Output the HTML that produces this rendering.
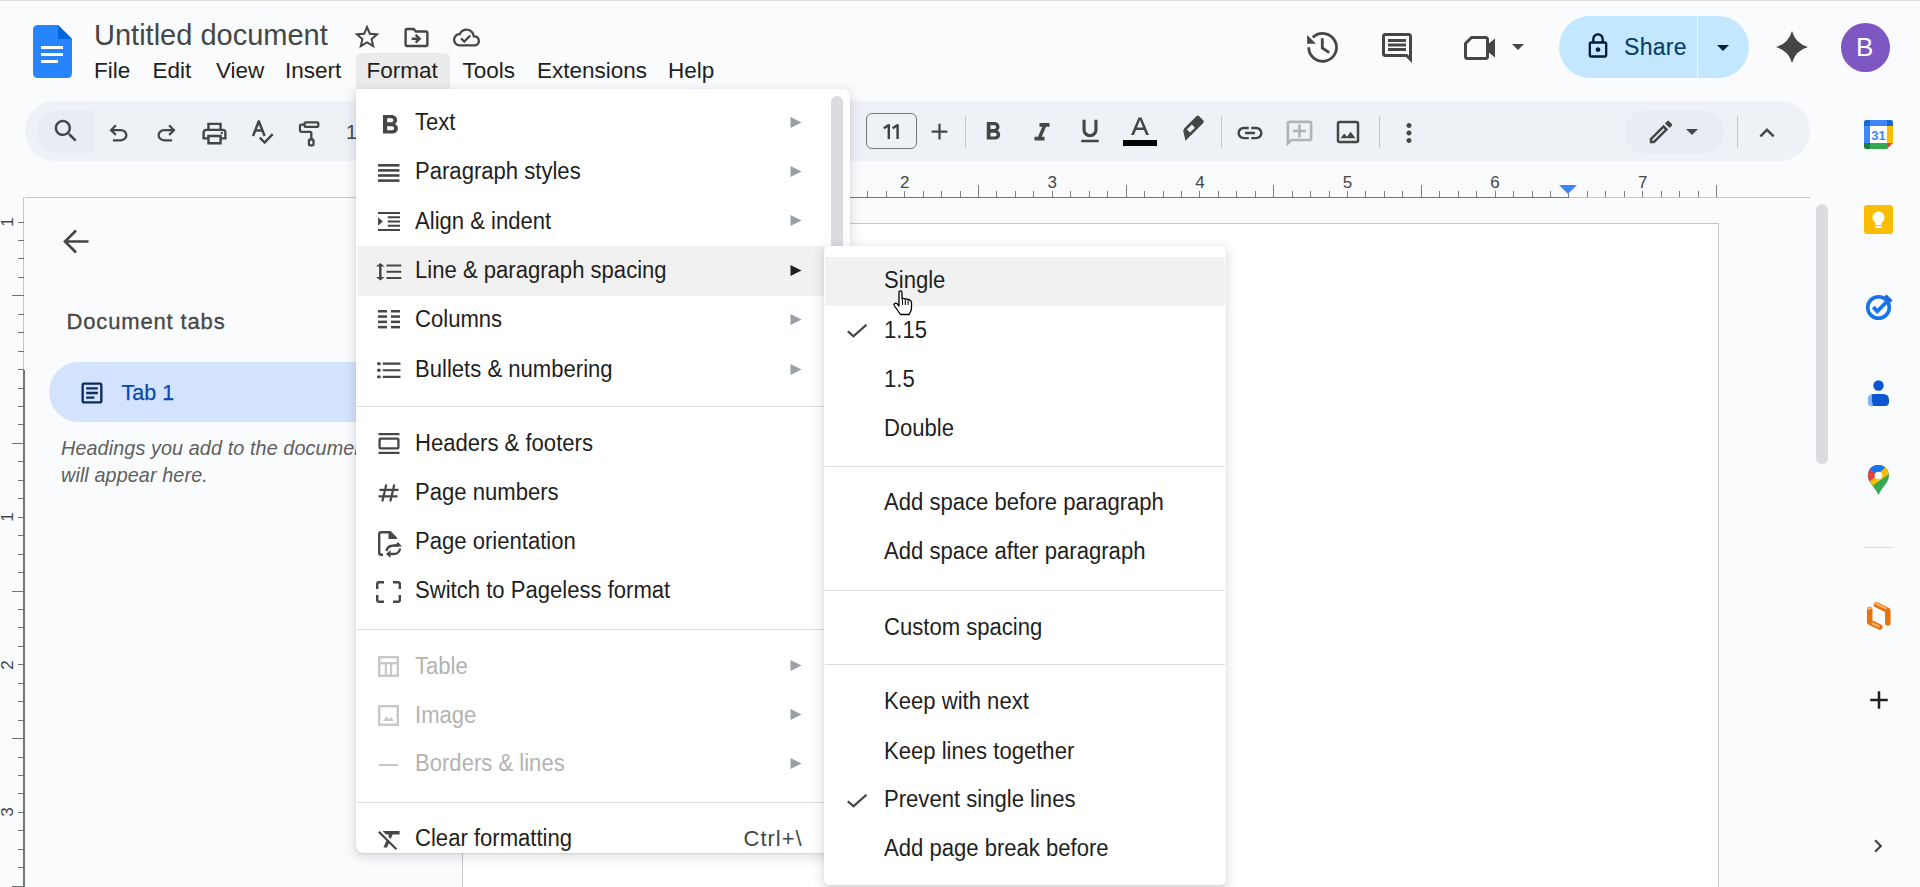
<!DOCTYPE html>
<html><head><meta charset="utf-8"><style>
html,body{margin:0;padding:0}
body{width:1920px;height:887px;overflow:hidden;position:relative;background:#f9fbfd;font-family:"Liberation Sans",sans-serif}
.t{position:absolute;line-height:1;white-space:nowrap;font-family:"Liberation Sans",sans-serif}
svg{overflow:visible}
</style></head><body>
<div style="position:absolute;left:0px;top:0px;width:1920px;height:1px;background:#dcdde1"></div>
<div style="position:absolute;left:462px;top:223px;width:1257px;height:700px;background:#fff;border:1px solid #c7c7c7;box-sizing:border-box"></div>
<svg style="position:absolute;left:33px;top:25px;" width="39" height="53" viewBox="0 0 39 53"><path d="M0 5 Q0 0 5 0 H25 L39 14 V48 Q39 53 34 53 H5 Q0 53 0 48Z" fill="#2684fc"/>
<path d="M25 0 L39 14 H25Z" fill="#0066da"/>
<rect x="8" y="21" width="22" height="3" fill="#fff"/><rect x="8" y="28" width="22" height="3" fill="#fff"/><rect x="8" y="35" width="17" height="3" fill="#fff"/></svg>
<div class="t" style="left:94px;top:21.35px;font-size:29px;color:#444746;letter-spacing:0px">Untitled document</div>
<svg style="position:absolute;left:352.00px;top:21.50px;" width="30" height="30" viewBox="0 0 24 24"><path fill="#444746" d="M22 9.24l-7.19-.62L12 2 9.19 8.63 2 9.24l5.46 4.73L5.82 21 12 17.27 18.18 21l-1.63-7.03L22 9.24zM12 15.4l-3.76 2.27 1-4.28-3.32-2.88 4.38-.38L12 6.1l1.71 4.04 4.38.38-3.32 2.88 1 4.28L12 15.4z"/></svg>
<svg style="position:absolute;left:401.50px;top:22.50px;" width="29" height="29" viewBox="0 0 24 24"><path fill="#444746" d="M20 6h-8l-2-2H4c-1.1 0-1.99.9-1.99 2L2 18c0 1.1.9 2 2 2h16c1.1 0 2-.9 2-2V8c0-1.1-.9-2-2-2zm0 12H4V6h5.17l2 2H20v10zm-7.84-6H8v2h4.16l-1.59 1.59L11.99 17 16 13.01 11.99 9l-1.41 1.41L12.16 12z"/></svg>
<svg style="position:absolute;left:452.50px;top:23.50px;" width="27" height="27" viewBox="0 0 24 24"><path fill="#444746" d="M19.35 10.04C18.67 6.59 15.64 4 12 4 9.11 4 6.6 5.64 5.35 8.04 2.34 8.36 0 10.91 0 14c0 3.31 2.69 6 6 6h13c2.76 0 5-2.240 5-5 0-2.64-2.05-4.78-4.65-4.96zM19 18H6c-2.21 0-4-1.790-4-4 0-2.05 1.53-3.76 3.56-3.97l1.07-.11.5-.95C8.080 7.14 9.94 6 12 6c2.62 0 4.88 1.86 5.39 4.43l.3 1.5 1.53.11c1.56.1 2.78 1.41 2.78 2.96 0 1.65-1.35 3-3 3zm-9-3.82l-2.09-2.09L6.5 13.5 10 17l6.01-6.01-1.41-1.41z"/></svg>
<div style="position:absolute;left:356px;top:53px;width:94px;height:36px;background:#ebebec;border-radius:6px 6px 0 0"></div>
<div class="t" style="left:94px;top:60.38px;font-size:22.5px;color:#1f1f1f;">File</div>
<div class="t" style="left:152.5px;top:60.38px;font-size:22.5px;color:#1f1f1f;">Edit</div>
<div class="t" style="left:216px;top:60.38px;font-size:22.5px;color:#1f1f1f;">View</div>
<div class="t" style="left:285px;top:60.38px;font-size:22.5px;color:#1f1f1f;">Insert</div>
<div class="t" style="left:366.5px;top:60.38px;font-size:22.5px;color:#1f1f1f;">Format</div>
<div class="t" style="left:462.5px;top:60.38px;font-size:22.5px;color:#1f1f1f;">Tools</div>
<div class="t" style="left:537px;top:60.38px;font-size:22.5px;color:#1f1f1f;">Extensions</div>
<div class="t" style="left:668px;top:60.38px;font-size:22.5px;color:#1f1f1f;">Help</div>
<svg style="position:absolute;left:1300px;top:25px;" width="46" height="46" viewBox="0 0 46 46"><path d="M8.7 22.3 A13.9 13.9 0 1 0 12.8 12.5" fill="none" stroke="#444746" stroke-width="2.8"/><path d="M7.1 10 V18.8 H15.9Z" fill="#444746"/><path d="M22.3 13.2 V23 L29.2 27.7" fill="none" stroke="#444746" stroke-width="2.8"/></svg>
<svg style="position:absolute;left:1379.00px;top:30.00px;" width="36" height="36" viewBox="0 0 24 24"><path fill="#444746" d="M21.99 4c0-1.1-.89-2-1.99-2H4c-1.1 0-2 .9-2 2v12c0 1.1.9 2 2 2h14l4 4-.01-18zM20 4v13.17L18.83 16H4V4h16zM6 12h12v2H6zm0-3h12v2H6zm0-3h12v2H6z"/></svg>
<svg style="position:absolute;left:1464px;top:35px;" width="32" height="26" viewBox="0 0 32 26"><path d="M1.5 8.5 L7.5 2.5 H21.5 Q23.5 2.5 23.5 4.5 V21.5 Q23.5 23.5 21.5 23.5 H3.5 Q1.5 23.5 1.5 21.5 Z" fill="none" stroke="#444746" stroke-width="3" stroke-linejoin="round"/><path d="M23 10 L31 3.5 V22.5 L23 16Z" fill="#444746"/></svg>
<svg style="position:absolute;left:1512px;top:44px;" width="12" height="6" viewBox="0 0 12 6"><path d="M0 0 H12 L6 6Z" fill="#444746"/></svg>
<div style="position:absolute;left:1559px;top:16px;width:190px;height:62px;background:#c2e7ff;border-radius:31px"></div>
<div style="position:absolute;left:1697px;top:16px;width:1px;height:62px;background:#f9fbfd;opacity:.8"></div>
<svg style="position:absolute;left:1584.00px;top:32.00px;" width="28" height="28" viewBox="0 0 24 24"><path fill="#001d35" d="M18 8h-1V6c0-2.76-2.24-5-5-5S7 3.24 7 6v2H6c-1.1 0-2 .9-2 2v10c0 1.1.9 2 2 2h12c1.1 0 2-.9 2-2V10c0-1.1-.9-2-2-2zM9 6c0-1.66 1.34-3 3-3s3 1.34 3 3v2H9V6zm9 14H6V10h12v10zm-6-3c1.1 0 2-.9 2-2s-.9-2-2-2-2 .9-2 2 .9 2 2 2z"/></svg>
<div class="t" style="left:1624px;top:35.75px;font-size:23px;color:#063f69;-webkit-text-stroke:0.15px #063f69;letter-spacing:0.3px">Share</div>
<svg style="position:absolute;left:1717px;top:45px;" width="12" height="6" viewBox="0 0 12 6"><path d="M0 0 H12 L6 6Z" fill="#001d35"/></svg>
<svg style="position:absolute;left:1776px;top:31px;" width="32" height="32" viewBox="0 0 32 32"><path d="M16 0 Q19.5 12.5 32 16 Q19.5 19.5 16 32 Q12.5 19.5 0 16 Q12.5 12.5 16 0Z" fill="#444746"/></svg>
<div style="position:absolute;left:1841px;top:23px;width:49px;height:49px;background:#7e57c2;border-radius:50%"></div>
<div class="t" style="left:1856px;top:33.90px;font-size:26px;color:#fff;">B</div>
<div style="position:absolute;left:25px;top:101px;width:1785px;height:60px;background:#eef1f6;border-radius:30px"></div>
<div style="position:absolute;left:37px;top:110px;width:58px;height:43px;background:#e8ecf3;border-radius:22px 0 0 22px"></div>
<svg style="position:absolute;left:51.00px;top:116.00px;" width="30" height="30" viewBox="0 0 24 24"><path fill="#444746" d="M15.5 14h-.79l-.28-.27C15.41 12.59 16 11.11 16 9.5 16 5.91 13.09 3 9.5 3S3 5.91 3 9.5 5.91 16 9.5 16c1.61 0 3.09-.59 4.23-1.57l.27.28v.79l5 4.99L20.49 19l-4.99-5zm-6 0C7.01 14 5 11.99 5 9.5S7.01 5 9.5 5 14 7.01 14 9.5 11.99 14 9.5 14z"/></svg>
<svg style="position:absolute;left:104.50px;top:119.50px;" width="27" height="27" viewBox="0 -960 960 960"><path fill="#444746" d="M280-200v-80h284q63 0 109.5-40T720-420q0-60-46.5-100T564-560H312l104 104-56 56-200-200 200-200 56 56-104 104h252q97 0 166.5 63T800-420q0 94-69.5 157T564-200H280Z"/></svg>
<svg style="position:absolute;left:152.50px;top:119.50px;" width="27" height="27" viewBox="0 -960 960 960"><path fill="#444746" d="M396-200q-97 0-166.5-63T160-420q0-94 69.5-157T396-640h252L544-744l56-56 200 200-200 200-56-56 104-104H396q-63 0-109.5 40T240-420q0 60 46.5 100T396-280h284v80H396Z"/></svg>
<svg style="position:absolute;left:199.50px;top:118.50px;" width="29" height="29" viewBox="0 -960 960 960"><path fill="#444746" d="M640-640v-120H320v120h-80v-200h480v200h-80Zm-480 80h640-640Zm560 100q17 0 28.5-11.5T760-500q0-17-11.5-28.5T720-540q-17 0-28.5 11.5T680-500q0 17 11.5 28.5T720-460Zm-80 260v-160H320v160h320Zm80 80H240v-160H80v-240q0-51 35-85.5t85-34.5h560q51 0 85.5 34.5T880-520v240H720v160Zm80-240v-160q0-17-11.5-28.5T760-560H200q-17 0-28.5 11.5T160-520v160h80v-80h480v80h80Z"/></svg>
<svg style="position:absolute;left:240px;top:110px;" width="40" height="40" viewBox="0 0 40 40"><path d="M13 26 L18.8 11.3 L24.6 26 M15.2 20.6 H22.4" fill="none" stroke="#444746" stroke-width="2.5" stroke-linejoin="round"/><path d="M19.8 27.7 L24.6 32.5 L32.7 24.1" fill="none" stroke="#444746" stroke-width="2.4"/></svg>
<svg style="position:absolute;left:298px;top:118px;" width="24" height="30" viewBox="0 0 24 30"><rect x="6.6" y="4.3" width="13.7" height="4.6" rx="1" fill="none" stroke="#444746" stroke-width="2.3"/><path d="M6.5 6.7 H3.2 Q2 6.7 2 7.9 V12.6 Q2 13.8 3.2 13.8 H12.1 Q13.3 13.8 13.3 15 V21" fill="none" stroke="#444746" stroke-width="2.3"/><rect x="10.9" y="21.5" width="4.6" height="5.9" rx="1.2" fill="none" stroke="#444746" stroke-width="2.3"/></svg>
<div class="t" style="left:346px;top:122.00px;font-size:20px;color:#444746;">1</div>
<div style="position:absolute;left:866px;top:113px;width:51px;height:36px;border:1px solid #747775;border-radius:6px;box-sizing:border-box"></div>
<svg style="position:absolute;left:883px;top:123.8px;" width="18" height="15" viewBox="0 0 18 15"><path d="M5.8 0.3 V15 M0.8 4.2 L5.8 1 M14.6 0.3 V15 M9.6 4.2 L14.6 1" fill="none" stroke="#3c4043" stroke-width="2.4"/></svg>
<svg style="position:absolute;left:926.00px;top:117.80px;" width="27" height="27" viewBox="0 0 24 24"><path fill="#444746" d="M19 13h-6v6h-2v-6H5v-2h6V5h2v6h6v2z"/></svg>
<div style="position:absolute;left:965px;top:116px;width:1px;height:32px;background:#c7c7c7"></div>
<svg style="position:absolute;left:978.00px;top:117.00px;" width="30" height="30" viewBox="0 0 24 24"><path fill="#444746" d="M15.6 10.79c.97-.67 1.65-1.77 1.65-2.790 0-2.26-1.75-4-4-4H7v14h7.04c2.09 0 3.71-1.7 3.71-3.79 0-1.52-.86-2.82-2.15-3.42zM10 6.5h3c.83 0 1.5.67 1.5 1.5s-.67 1.5-1.5 1.5h-3v-3zm3.5 9H10v-3h3.5c.83 0 1.5.67 1.5 1.5s-.67 1.5-1.5 1.5z"/></svg>
<svg style="position:absolute;left:1027.00px;top:118.00px;" width="30" height="30" viewBox="0 0 24 24"><path fill="#444746" d="M10 4v3h2.21l-3.42 8H6v3h8v-3h-2.21l3.42-8H18V4z"/></svg>
<svg style="position:absolute;left:1075.00px;top:116.00px;" width="30" height="30" viewBox="0 0 24 24"><path fill="#444746" d="M12 17c3.31 0 6-2.69 6-6V3h-2.5v8c0 1.93-1.57 3.5-3.5 3.5S8.5 12.93 8.5 11V3H6v8c0 3.31 2.69 6 6 6zm-7 2v2h14v-2H5z"/></svg>
<svg style="position:absolute;left:1123px;top:117px;" width="34" height="30" viewBox="0 0 34 30"><path d="M8 18 L15.5 0.5 H18.5 L26 18 H23 L21 13 H13 L11 18Z M14 10.5 H20 L17 3Z" fill="#444746"/><rect x="0" y="23" width="34" height="6" fill="#000"/></svg>
<svg style="position:absolute;left:1170px;top:110px;" width="45" height="45" viewBox="0 0 45 45"><g transform="translate(22,17.5) rotate(-45)"><rect x="-8" y="-4.8" width="21" height="9.6" rx="2" fill="#444746"/><rect x="-5" y="-2.2" width="7" height="4.4" fill="#eef1f6"/><path d="M-8 -4.8 L-14 4.8 H-7Z" fill="#444746"/></g></svg>
<div style="position:absolute;left:1221px;top:116px;width:1px;height:32px;background:#c7c7c7"></div>
<svg style="position:absolute;left:1235.00px;top:118.00px;" width="30" height="30" viewBox="0 0 24 24"><path fill="#444746" d="M3.9 12c0-1.71 1.39-3.1 3.1-3.1h4V7H7c-2.76 0-5 2.24-5 5s2.24 5 5 5h4v-1.9H7c-1.71 0-3.1-1.39-3.1-3.1zM8 13h8v-2H8v2zm9-6h-4v1.9h4c1.71 0 3.1 1.39 3.1 3.1s-1.39 3.1-3.1 3.1h-4V17h4c2.76 0 5-2.24 5-5s-2.24-5-5-5z"/></svg>
<svg style="position:absolute;left:1283.50px;top:117.50px;" width="31" height="31" viewBox="0 0 24 24"><path fill="#b0b3b8" d="M2 4c0-1.1.9-2 2-2h16c1.1 0 2 .9 2 2v12c0 1.1-.9 2-2 2H6l-4 4V4zm2 13.17L5.17 16H20V4H4v13.17zM11 5h2v4h4v2h-4v4h-2v-4H7V9h4z"/></svg>
<svg style="position:absolute;left:1333.00px;top:117.00px;" width="30" height="30" viewBox="0 0 24 24"><path fill="#444746" d="M19 5v14H5V5h14m0-2H5c-1.1 0-2 .9-2 2v14c0 1.1.9 2 2 2h14c1.1 0 2-.9 2-2V5c0-1.1-.9-2-2-2zm-4.86 8.86l-3 3.87L9 13.14 6 17h12l-3.86-5.14z"/></svg>
<div style="position:absolute;left:1379px;top:116px;width:1px;height:32px;background:#c7c7c7"></div>
<svg style="position:absolute;left:1394.00px;top:118.00px;" width="30" height="30" viewBox="0 0 24 24"><path fill="#444746" d="M12 8c1.1 0 2-.9 2-2s-.9-2-2-2-2 .9-2 2 .9 2 2 2zm0 2c-1.1 0-2 .9-2 2s.9 2 2 2 2-.9 2-2-.9-2-2-2zm0 6c-1.1 0-2 .9-2 2s.9 2 2 2 2-.9 2-2-.9-2-2-2z"/></svg>
<div style="position:absolute;left:1625px;top:110px;width:99px;height:44px;background:#e8ecf3;border-radius:22px"></div>
<svg style="position:absolute;left:1646.00px;top:117.00px;" width="30" height="30" viewBox="0 0 24 24"><path fill="#444746" d="M14.06 9.02l.92.92L5.92 19H5v-.92l9.06-9.06M17.66 3c-.25 0-.51.1-.7.29l-1.83 1.83 3.75 3.75 1.83-1.830c.39-.39.39-1.02 0-1.41l-2.34-2.34c-.2-.2-.45-.29-.71-.29zm-3.6 3.19L3 17.25V21h3.75L17.81 9.94l-3.750-3.75z"/></svg>
<svg style="position:absolute;left:1686px;top:129px;" width="12" height="6" viewBox="0 0 12 6"><path d="M0 0 H12 L6 6Z" fill="#444746"/></svg>
<div style="position:absolute;left:1737px;top:116px;width:1px;height:32px;background:#c7c7c7"></div>
<svg style="position:absolute;left:1752.00px;top:118.00px;" width="30" height="30" viewBox="0 0 24 24"><path fill="#444746" d="M12 8l-6 6 1.41 1.41L12 10.83l4.59 4.58L18 14z"/></svg>
<div style="position:absolute;left:25px;top:197px;width:1785px;height:1px;background:#c7c7c7"></div>
<div style="position:absolute;left:609px;top:196.5px;width:960px;height:1.5px;background:#747775"></div>
<svg style="position:absolute;left:0px;top:0px;" width="1920" height="200" viewBox="0 0 1920 200"><rect x="480" y="191" width="1" height="6" fill="#7d8083"/><rect x="498" y="191" width="1" height="6" fill="#7d8083"/><rect x="517" y="191" width="1" height="6" fill="#7d8083"/><rect x="535" y="185" width="1" height="12" fill="#7d8083"/><rect x="554" y="191" width="1" height="6" fill="#7d8083"/><rect x="572" y="191" width="1" height="6" fill="#7d8083"/><rect x="591" y="191" width="1" height="6" fill="#7d8083"/><rect x="609" y="191" width="1" height="6" fill="#7d8083"/><rect x="627" y="191" width="1" height="6" fill="#7d8083"/><rect x="646" y="191" width="1" height="6" fill="#7d8083"/><rect x="664" y="191" width="1" height="6" fill="#7d8083"/><rect x="683" y="185" width="1" height="12" fill="#7d8083"/><rect x="701" y="191" width="1" height="6" fill="#7d8083"/><rect x="720" y="191" width="1" height="6" fill="#7d8083"/><rect x="738" y="191" width="1" height="6" fill="#7d8083"/><rect x="757" y="191" width="1" height="6" fill="#7d8083"/><rect x="775" y="191" width="1" height="6" fill="#7d8083"/><rect x="794" y="191" width="1" height="6" fill="#7d8083"/><rect x="812" y="191" width="1" height="6" fill="#7d8083"/><rect x="830" y="185" width="1" height="12" fill="#7d8083"/><rect x="849" y="191" width="1" height="6" fill="#7d8083"/><rect x="867" y="191" width="1" height="6" fill="#7d8083"/><rect x="886" y="191" width="1" height="6" fill="#7d8083"/><rect x="904" y="191" width="1" height="6" fill="#7d8083"/><rect x="923" y="191" width="1" height="6" fill="#7d8083"/><rect x="941" y="191" width="1" height="6" fill="#7d8083"/><rect x="960" y="191" width="1" height="6" fill="#7d8083"/><rect x="978" y="185" width="1" height="12" fill="#7d8083"/><rect x="996" y="191" width="1" height="6" fill="#7d8083"/><rect x="1015" y="191" width="1" height="6" fill="#7d8083"/><rect x="1033" y="191" width="1" height="6" fill="#7d8083"/><rect x="1052" y="191" width="1" height="6" fill="#7d8083"/><rect x="1070" y="191" width="1" height="6" fill="#7d8083"/><rect x="1089" y="191" width="1" height="6" fill="#7d8083"/><rect x="1107" y="191" width="1" height="6" fill="#7d8083"/><rect x="1126" y="185" width="1" height="12" fill="#7d8083"/><rect x="1144" y="191" width="1" height="6" fill="#7d8083"/><rect x="1163" y="191" width="1" height="6" fill="#7d8083"/><rect x="1181" y="191" width="1" height="6" fill="#7d8083"/><rect x="1199" y="191" width="1" height="6" fill="#7d8083"/><rect x="1218" y="191" width="1" height="6" fill="#7d8083"/><rect x="1236" y="191" width="1" height="6" fill="#7d8083"/><rect x="1255" y="191" width="1" height="6" fill="#7d8083"/><rect x="1273" y="185" width="1" height="12" fill="#7d8083"/><rect x="1292" y="191" width="1" height="6" fill="#7d8083"/><rect x="1310" y="191" width="1" height="6" fill="#7d8083"/><rect x="1329" y="191" width="1" height="6" fill="#7d8083"/><rect x="1347" y="191" width="1" height="6" fill="#7d8083"/><rect x="1365" y="191" width="1" height="6" fill="#7d8083"/><rect x="1384" y="191" width="1" height="6" fill="#7d8083"/><rect x="1402" y="191" width="1" height="6" fill="#7d8083"/><rect x="1421" y="185" width="1" height="12" fill="#7d8083"/><rect x="1439" y="191" width="1" height="6" fill="#7d8083"/><rect x="1458" y="191" width="1" height="6" fill="#7d8083"/><rect x="1476" y="191" width="1" height="6" fill="#7d8083"/><rect x="1495" y="191" width="1" height="6" fill="#7d8083"/><rect x="1513" y="191" width="1" height="6" fill="#7d8083"/><rect x="1532" y="191" width="1" height="6" fill="#7d8083"/><rect x="1550" y="191" width="1" height="6" fill="#7d8083"/><rect x="1568" y="185" width="1" height="12" fill="#7d8083"/><rect x="1587" y="191" width="1" height="6" fill="#7d8083"/><rect x="1605" y="191" width="1" height="6" fill="#7d8083"/><rect x="1624" y="191" width="1" height="6" fill="#7d8083"/><rect x="1642" y="191" width="1" height="6" fill="#7d8083"/><rect x="1661" y="191" width="1" height="6" fill="#7d8083"/><rect x="1679" y="191" width="1" height="6" fill="#7d8083"/><rect x="1698" y="191" width="1" height="6" fill="#7d8083"/><rect x="1716" y="185" width="1" height="12" fill="#7d8083"/></svg>
<div class="t" style="left:737.10px;top:173.55px;width:40px;text-align:center;font-size:17px;color:#444746">1</div>
<div class="t" style="left:884.70px;top:173.55px;width:40px;text-align:center;font-size:17px;color:#444746">2</div>
<div class="t" style="left:1032.30px;top:173.55px;width:40px;text-align:center;font-size:17px;color:#444746">3</div>
<div class="t" style="left:1179.90px;top:173.55px;width:40px;text-align:center;font-size:17px;color:#444746">4</div>
<div class="t" style="left:1327.50px;top:173.55px;width:40px;text-align:center;font-size:17px;color:#444746">5</div>
<div class="t" style="left:1475.10px;top:173.55px;width:40px;text-align:center;font-size:17px;color:#444746">6</div>
<div class="t" style="left:1622.70px;top:173.55px;width:40px;text-align:center;font-size:17px;color:#444746">7</div>
<svg style="position:absolute;left:1559px;top:185px;" width="18" height="9" viewBox="0 0 18 9"><path d="M0 0 H18 L9 9Z" fill="#4285f4"/></svg>
<div style="position:absolute;left:23px;top:197px;width:1px;height:173px;background:#c7c7c7"></div>
<div style="position:absolute;left:23px;top:369.5px;width:1.5px;height:520px;background:#747775"></div>
<svg style="position:absolute;left:0px;top:0px;" width="30" height="887" viewBox="0 0 30 887"><rect x="18" y="222" width="6" height="1" fill="#6f7275"/><rect x="18" y="240" width="6" height="1" fill="#6f7275"/><rect x="18" y="258" width="6" height="1" fill="#6f7275"/><rect x="18" y="277" width="6" height="1" fill="#6f7275"/><rect x="12" y="295" width="12" height="1" fill="#6f7275"/><rect x="18" y="314" width="6" height="1" fill="#6f7275"/><rect x="18" y="332" width="6" height="1" fill="#6f7275"/><rect x="18" y="351" width="6" height="1" fill="#6f7275"/><rect x="18" y="369" width="6" height="1" fill="#6f7275"/><rect x="18" y="388" width="6" height="1" fill="#6f7275"/><rect x="18" y="406" width="6" height="1" fill="#6f7275"/><rect x="18" y="424" width="6" height="1" fill="#6f7275"/><rect x="12" y="443" width="12" height="1" fill="#6f7275"/><rect x="18" y="461" width="6" height="1" fill="#6f7275"/><rect x="18" y="480" width="6" height="1" fill="#6f7275"/><rect x="18" y="498" width="6" height="1" fill="#6f7275"/><rect x="18" y="517" width="6" height="1" fill="#6f7275"/><rect x="18" y="535" width="6" height="1" fill="#6f7275"/><rect x="18" y="554" width="6" height="1" fill="#6f7275"/><rect x="18" y="572" width="6" height="1" fill="#6f7275"/><rect x="12" y="591" width="12" height="1" fill="#6f7275"/><rect x="18" y="609" width="6" height="1" fill="#6f7275"/><rect x="18" y="627" width="6" height="1" fill="#6f7275"/><rect x="18" y="646" width="6" height="1" fill="#6f7275"/><rect x="18" y="664" width="6" height="1" fill="#6f7275"/><rect x="18" y="683" width="6" height="1" fill="#6f7275"/><rect x="18" y="701" width="6" height="1" fill="#6f7275"/><rect x="18" y="720" width="6" height="1" fill="#6f7275"/><rect x="12" y="738" width="12" height="1" fill="#6f7275"/><rect x="18" y="757" width="6" height="1" fill="#6f7275"/><rect x="18" y="775" width="6" height="1" fill="#6f7275"/><rect x="18" y="793" width="6" height="1" fill="#6f7275"/><rect x="18" y="812" width="6" height="1" fill="#6f7275"/><rect x="18" y="830" width="6" height="1" fill="#6f7275"/><rect x="18" y="849" width="6" height="1" fill="#6f7275"/><rect x="18" y="867" width="6" height="1" fill="#6f7275"/><rect x="12" y="886" width="12" height="1" fill="#6f7275"/></svg>
<div class="t" style="left:-13px;top:213.00px;width:40px;height:18px;text-align:center;font-size:17px;line-height:18px;color:#444746;transform:rotate(-90deg);transform-origin:20px 9px;left:-12px">1</div>
<div class="t" style="left:-13px;top:508.20px;width:40px;height:18px;text-align:center;font-size:17px;line-height:18px;color:#444746;transform:rotate(-90deg);transform-origin:20px 9px;left:-12px">1</div>
<div class="t" style="left:-13px;top:655.80px;width:40px;height:18px;text-align:center;font-size:17px;line-height:18px;color:#444746;transform:rotate(-90deg);transform-origin:20px 9px;left:-12px">2</div>
<div class="t" style="left:-13px;top:803.40px;width:40px;height:18px;text-align:center;font-size:17px;line-height:18px;color:#444746;transform:rotate(-90deg);transform-origin:20px 9px;left:-12px">3</div>
<svg style="position:absolute;left:62px;top:228px;" width="28" height="27" viewBox="0 0 28 27"><path d="M26.5 13.5 H3 M14 2.5 L3 13.5 L14 24.5" fill="none" stroke="#444746" stroke-width="2.6"/></svg>
<div class="t" style="left:66.5px;top:310.60px;font-size:22px;color:#444746;-webkit-text-stroke:0.3px #444746;letter-spacing:0.85px">Document tabs</div>
<div style="position:absolute;left:49px;top:362px;width:400px;height:60px;background:#d3e3fd;border-radius:30px"></div>
<svg style="position:absolute;left:78.00px;top:379.00px;" width="28" height="28" viewBox="0 0 24 24"><path fill="#0b2c5e" d="M19 5v14H5V5h14m0-2H5c-1.1 0-2 .9-2 2v14c0 1.1.9 2 2 2h14c1.1 0 2-.9 2-2V5c0-1.1-.9-2-2-2zM14 17H7v-2h7v2zm3-4H7v-2h10v2zm0-4H7V7h10v2z"/></svg>
<div class="t" style="left:121.5px;top:382.73px;font-size:21.5px;color:#0b4aa8;-webkit-text-stroke:0.25px #0b4aa8">Tab 1</div>
<div class="t" style="left:61px;top:439.17px;font-size:19.8px;color:#5e5e5e;font-style:italic;letter-spacing:0.1px">Headings you add to the document</div>
<div class="t" style="left:61px;top:465.57px;font-size:19.8px;color:#5e5e5e;font-style:italic;letter-spacing:0.1px">will appear here.</div>
<div style="position:absolute;left:1816px;top:204px;width:12px;height:260px;background:#dadce0;border-radius:6px"></div>
<svg style="position:absolute;left:1864px;top:120px;" width="29" height="29" viewBox="0 0 29 29"><rect x="0" y="0" width="29" height="29" rx="2" fill="#fff"/>
<path d="M6 0 H23 V6 H6Z" fill="#4285f4"/><path d="M0 6 V23 H6 V6Z" fill="#4285f4"/><path d="M2 0 H6 V6 H0 V2 Q0 0 2 0Z" fill="#1967d2"/>
<path d="M23 0 H27 Q29 0 29 2 V6 H23Z" fill="#1967d2"/><path d="M23 6 H29 V23 H23Z" fill="#fbbc04"/>
<path d="M6 23 H23 V29 H6Z" fill="#34a853"/><path d="M0 23 H6 V29 H2 Q0 29 0 27Z" fill="#188038"/><path d="M23 23 H29 L23 29Z" fill="#ea4335"/>
<text x="14.5" y="20" text-anchor="middle" font-family="Liberation Sans" font-weight="bold" font-size="13" fill="#4285f4">31</text></svg>
<svg style="position:absolute;left:1864px;top:205px;" width="29" height="29" viewBox="0 0 29 29"><rect x="0" y="0" width="29" height="29" rx="3" fill="#fbbc04"/>
<circle cx="14.5" cy="12.5" r="6" fill="#fff"/><rect x="11.5" y="16" width="6" height="4" fill="#fff"/><rect x="11.5" y="21" width="6" height="2" fill="#fff"/></svg>
<svg style="position:absolute;left:1865px;top:294px;" width="28" height="26" viewBox="0 0 28 26"><circle cx="13.5" cy="13.5" r="10.8" fill="none" stroke="#1a73e8" stroke-width="3.6"/><path d="M8.2 13.2 L12.3 17.3 L24.5 5" fill="none" stroke="#1a73e8" stroke-width="3.8"/><path d="M20.5 1.5 L26.5 7.5" stroke="#1967d2" stroke-width="3"/></svg>
<svg style="position:absolute;left:1867px;top:380px;" width="23" height="26" viewBox="0 0 23 26"><circle cx="11.5" cy="5.5" r="5.2" fill="#0b57d0"/><path d="M1 20 Q1 14 7 14 H16 Q22 14 22 20 V22 Q22 26 18 26 H5 Q1 26 1 22Z" fill="#0b57d0"/><path d="M5 14.5 Q1 15.5 1 20 V22 Q1 26 5 26 H6 Q4 20 5 14.5Z" fill="#8ab4f8"/></svg>
<svg style="position:absolute;left:1868px;top:465px;" width="21" height="30" viewBox="0 0 21 30"><path d="M10.5 0 C4.5 0 0 4.5 0 10.5 C0 17 6 21 10.5 30 C15 21 21 17 21 10.5 C21 4.5 16.5 0 10.5 0Z" fill="#34a853"/>
<path d="M10.5 0 C4.5 0 0 4.5 0 10.5 C0 13 1 15 2 16.5 L17 2.5 C15 1 13 0 10.5 0Z" fill="#4285f4"/>
<path d="M2 3.5 C1 5 0 7.5 0 10.5 C0 13 1 15 2 16.5 L8 10.5Z" fill="#ea4335"/>
<path d="M17 2.5 L2 16.5 C3 18 4 19.3 5 20.5 L21 9 C20.5 6.5 19 4 17 2.5Z" fill="#fbbc04"/>
<path d="M2 3.5 C4 1.3 7 0 10.5 0 C13 0 15 1 17 2.5 L8 10.5Z" fill="#1a73e8"/>
<circle cx="10.5" cy="10.5" r="3.8" fill="#fff"/></svg>
<div style="position:absolute;left:1863px;top:547px;width:30px;height:1px;background:#dadce0"></div>
<svg style="position:absolute;left:1858px;top:585px;" width="40" height="45" viewBox="0 0 40 45"><path d="M11.7 24.5 V37.3 L21.8 42" fill="none" stroke="#e8710a" stroke-width="5.5" stroke-linejoin="round" stroke-linecap="round"/><path d="M18.5 19.8 L29.8 25.4 V38" fill="none" stroke="#e8710a" stroke-width="5.5" stroke-linejoin="round" stroke-linecap="round"/><path d="M10 24 L13 23 M14.5 38.5 L21 41.5 M18 18.5 L28 23.5" stroke="#fbb36b" stroke-width="2" stroke-linecap="round"/></svg>
<svg style="position:absolute;left:1864.00px;top:685.00px;" width="30" height="30" viewBox="0 0 24 24"><path fill="#1f1f1f" d="M19 13h-6v6h-2v-6H5v-2h6V5h2v6h6v2z"/></svg>
<svg style="position:absolute;left:1865.00px;top:833.00px;" width="26" height="26" viewBox="0 0 24 24"><path fill="#444746" d="M10 6L8.59 7.41 13.17 12l-4.58 4.59L10 18l6-6z"/></svg>
<div style="position:absolute;left:356px;top:89px;width:494px;height:764px;background:#fff;border-radius:0 7px 7px 7px;box-shadow:0 3px 10px 3px rgba(60,64,67,.13),0 1px 2px rgba(60,64,67,.13)"></div>
<div style="position:absolute;left:831px;top:96px;width:12px;height:400px;background:#dadce0;border-radius:6px"></div>
<div style="position:absolute;left:357px;top:246px;width:467px;height:50px;background:#f1f1f1"></div>
<div class="t" style="left:415px;top:111.45px;font-size:23px;color:#1f1f1f;transform:scaleX(0.96);transform-origin:0 0">Text</div>
<svg style="position:absolute;left:790px;top:117.0px;" width="12" height="11" viewBox="0 0 12 11"><path d="M0.5 0 L11.5 5.5 L0.5 11Z" fill="#9aa0a6"/></svg>
<div class="t" style="left:415px;top:160.45px;font-size:23px;color:#1f1f1f;transform:scaleX(0.96);transform-origin:0 0">Paragraph styles</div>
<svg style="position:absolute;left:790px;top:166.0px;" width="12" height="11" viewBox="0 0 12 11"><path d="M0.5 0 L11.5 5.5 L0.5 11Z" fill="#9aa0a6"/></svg>
<div class="t" style="left:415px;top:209.75px;font-size:23px;color:#1f1f1f;transform:scaleX(0.96);transform-origin:0 0">Align & indent</div>
<svg style="position:absolute;left:790px;top:215.3px;" width="12" height="11" viewBox="0 0 12 11"><path d="M0.5 0 L11.5 5.5 L0.5 11Z" fill="#9aa0a6"/></svg>
<div class="t" style="left:415px;top:259.45px;font-size:23px;color:#1f1f1f;transform:scaleX(0.96);transform-origin:0 0">Line & paragraph spacing</div>
<svg style="position:absolute;left:790px;top:265.0px;" width="12" height="11" viewBox="0 0 12 11"><path d="M0.5 0 L11.5 5.5 L0.5 11Z" fill="#1f1f1f"/></svg>
<div class="t" style="left:415px;top:308.45px;font-size:23px;color:#1f1f1f;transform:scaleX(0.96);transform-origin:0 0">Columns</div>
<svg style="position:absolute;left:790px;top:314.0px;" width="12" height="11" viewBox="0 0 12 11"><path d="M0.5 0 L11.5 5.5 L0.5 11Z" fill="#9aa0a6"/></svg>
<div class="t" style="left:415px;top:357.95px;font-size:23px;color:#1f1f1f;transform:scaleX(0.96);transform-origin:0 0">Bullets & numbering</div>
<svg style="position:absolute;left:790px;top:363.5px;" width="12" height="11" viewBox="0 0 12 11"><path d="M0.5 0 L11.5 5.5 L0.5 11Z" fill="#9aa0a6"/></svg>
<div style="position:absolute;left:357px;top:406px;width:467px;height:1px;background:#dadce0"></div>
<div class="t" style="left:415px;top:432.45px;font-size:23px;color:#1f1f1f;transform:scaleX(0.96);transform-origin:0 0">Headers &amp; footers</div>
<div class="t" style="left:415px;top:481.45px;font-size:23px;color:#1f1f1f;transform:scaleX(0.96);transform-origin:0 0">Page numbers</div>
<div class="t" style="left:415px;top:530.45px;font-size:23px;color:#1f1f1f;transform:scaleX(0.96);transform-origin:0 0">Page orientation</div>
<div class="t" style="left:415px;top:579.15px;font-size:23px;color:#1f1f1f;transform:scaleX(0.96);transform-origin:0 0">Switch to Pageless format</div>
<div style="position:absolute;left:357px;top:629px;width:467px;height:1px;background:#dadce0"></div>
<div class="t" style="left:415px;top:654.65px;font-size:23px;color:#b3b3b3;transform:scaleX(0.96);transform-origin:0 0">Table</div>
<svg style="position:absolute;left:790px;top:660.2px;" width="12" height="11" viewBox="0 0 12 11"><path d="M0.5 0 L11.5 5.5 L0.5 11Z" fill="#9aa0a6"/></svg>
<div class="t" style="left:415px;top:703.75px;font-size:23px;color:#b3b3b3;transform:scaleX(0.96);transform-origin:0 0">Image</div>
<svg style="position:absolute;left:790px;top:709.3px;" width="12" height="11" viewBox="0 0 12 11"><path d="M0.5 0 L11.5 5.5 L0.5 11Z" fill="#9aa0a6"/></svg>
<div class="t" style="left:415px;top:752.25px;font-size:23px;color:#b3b3b3;transform:scaleX(0.96);transform-origin:0 0">Borders &amp; lines</div>
<svg style="position:absolute;left:790px;top:757.8px;" width="12" height="11" viewBox="0 0 12 11"><path d="M0.5 0 L11.5 5.5 L0.5 11Z" fill="#9aa0a6"/></svg>
<div style="position:absolute;left:357px;top:802px;width:467px;height:1px;background:#dadce0"></div>
<div class="t" style="left:415px;top:827.45px;font-size:23px;color:#1f1f1f;transform:scaleX(0.96);transform-origin:0 0">Clear formatting</div>
<div class="t" style="left:743.5px;top:828.00px;font-size:22px;color:#444746;letter-spacing:1px">Ctrl+\</div>
<svg style="position:absolute;left:382.6px;top:114.5px" width="14.899999999999977" height="18.5" viewBox="7 4 10.75 14" preserveAspectRatio="none"><path fill="#444746" d="M15.6 10.79c.97-.67 1.65-1.77 1.65-2.79 0-2.26-1.75-4-4-4H7v14h7.04c2.09 0 3.71-1.7 3.71-3.79 0-1.52-.86-2.82-2.15-3.42zM10 6.5h3c.83 0 1.5.67 1.5 1.5s-.67 1.5-1.5 1.5h-3v-3zm3.5 9H10v-3h3.5c.83 0 1.5.67 1.5 1.5s-.67 1.5-1.5 1.5z"/></svg>
<svg style="position:absolute;left:378px;top:163.5px;" width="22" height="19" viewBox="0 0 22 19"><rect x="0" y="0" width="21.5" height="2.6" fill="#444746"/><rect x="0" y="5.1" width="21.5" height="2.6" fill="#444746"/><rect x="0" y="10.2" width="21.5" height="2.6" fill="#444746"/><rect x="0" y="15.3" width="21.5" height="2.6" fill="#444746"/></svg>
<svg style="position:absolute;left:378px;top:212px" width="22" height="19" viewBox="3 3 18 18" preserveAspectRatio="none"><path fill="#444746" d="M3 21h18v-2H3v2zM3 8v8l4-4-4-4zm8 9h10v-2H11v2zM3 3v2h18V3H3zm8 6h10V7H11v2zm0 4h10v-2H11v2z"/></svg>
<svg style="position:absolute;left:375.7px;top:262.5px" width="25.30000000000001" height="17.5" viewBox="1.5 3.5 20.5 17" preserveAspectRatio="none"><path fill="#444746" d="M6 7h2.5L5 3.5 1.5 7H4v10H1.5L5 20.5 8.5 17H6V7zm4-2v2h12V5H10zm0 14h12v-2H10v2zm0-6h12v-2H10v2z"/></svg>
<svg style="position:absolute;left:377.8px;top:310px;" width="23" height="19" viewBox="0 0 23 19"><rect x="0" y="0" width="9" height="2.5" fill="#444746"/><rect x="0" y="5.3" width="9" height="2.5" fill="#444746"/><rect x="0" y="10.6" width="9" height="2.5" fill="#444746"/><rect x="0" y="15.9" width="9" height="2.5" fill="#444746"/><rect x="13" y="0" width="9" height="2.5" fill="#444746"/><rect x="13" y="5.3" width="9" height="2.5" fill="#444746"/><rect x="13" y="10.6" width="9" height="2.5" fill="#444746"/><rect x="13" y="15.9" width="9" height="2.5" fill="#444746"/></svg>
<svg style="position:absolute;left:377px;top:361.5px" width="23.5" height="16.5" viewBox="2.5 4.5 18.5 15" preserveAspectRatio="none"><path fill="#444746" d="M4 10.5c-.83 0-1.5.67-1.5 1.5s.67 1.5 1.5 1.5 1.5-.67 1.5-1.5-.67-1.5-1.5-1.5zm0-6c-.83 0-1.5.67-1.5 1.5S3.17 7.5 4 7.5 5.5 6.83 5.5 6 4.83 4.5 4 4.5zm0 12c-.83 0-1.5.68-1.5 1.5s.68 1.5 1.5 1.5 1.5-.68 1.5-1.5-.67-1.5-1.5-1.5zM7 19h14v-2H7v2zm0-6h14v-2H7v2zm0-8v2h14V5H7z"/></svg>
<svg style="position:absolute;left:378.4px;top:433px;" width="22" height="21" viewBox="0 0 22 21"><rect x="0.5" y="0" width="21" height="2.2" fill="#444746"/><rect x="1.6" y="5.6" width="18.8" height="9.8" rx="1" fill="none" stroke="#444746" stroke-width="2.3"/><rect x="0.5" y="18.8" width="21" height="2.2" fill="#444746"/></svg>
<svg style="position:absolute;left:378px;top:484px;" width="21" height="18" viewBox="0 0 21 18"><path d="M8.3 0.5 L4.3 17.5 M16.3 0.5 L12.3 17.5 M1.5 5.8 H20.5 M0.5 12.3 H19.5" stroke="#444746" stroke-width="2.2" fill="none"/></svg>
<svg style="position:absolute;left:378px;top:531px;" width="25" height="25" viewBox="0 0 25 25"><path d="M11 1.2 H3.2 Q1.2 1.2 1.2 3.2 V21.8 Q1.2 23.8 3.2 23.8 H5" fill="none" stroke="#444746" stroke-width="2.4"/><path d="M10.5 0 H12.5 L19 6.5 V8 H10.5Z" fill="#444746"/><path d="M8.5 20 Q9.5 14.5 16 14.5 H20.5" fill="none" stroke="#444746" stroke-width="2.3"/><path d="M19 10.5 L23.5 14.5 L19 18.5Z" fill="#444746" transform="rotate(-90 20 14.5)"/><path d="M22 17.5 Q21.5 23 15.5 23 H11" fill="none" stroke="#444746" stroke-width="2.3"/><path d="M12.5 19 L8 23 L12.5 27Z" fill="#444746"/></svg>
<svg style="position:absolute;left:376px;top:580.7px;" width="25" height="22" viewBox="0 0 25 22"><path d="M1.2 8 V3 Q1.2 1.2 3 1.2 H8 M17 1.2 H22 Q23.8 1.2 23.8 3 V8 M23.8 14 V19 Q23.8 20.8 22 20.8 H17 M8 20.8 H3 Q1.2 20.8 1.2 19 V14" fill="none" stroke="#444746" stroke-width="2.4"/></svg>
<svg style="position:absolute;left:378px;top:656px;" width="21" height="21" viewBox="0 0 21 21"><rect x="1.2" y="1.2" width="18.6" height="18.6" fill="none" stroke="#c8c8c8" stroke-width="2.4"/><rect x="1" y="6" width="19" height="2.4" fill="#c8c8c8"/><rect x="6.8" y="7" width="2.2" height="12" fill="#c8c8c8"/><rect x="12" y="7" width="2.2" height="12" fill="#c8c8c8"/></svg>
<svg style="position:absolute;left:378px;top:705px;" width="21" height="21" viewBox="0 0 21 21"><rect x="1.2" y="1.2" width="18.6" height="18.6" fill="none" stroke="#c8c8c8" stroke-width="2.4"/><path d="M5 16 L8.5 11.5 L11 14 L13 12 L16 16Z" fill="#c8c8c8"/></svg>
<div style="position:absolute;left:379px;top:763.5px;width:19px;height:2.4px;background:#c8c8c8"></div>
<svg style="position:absolute;left:378px;top:830.6px" width="21.600000000000023" height="18.899999999999977" viewBox="2 5 18 16" preserveAspectRatio="none"><path fill="#444746" d="M3.27 5L2 6.27l6.97 6.97L6.5 19h3l1.57-3.66L16.73 21 18 19.73 3.55 5.27 3.27 5zM6 5v.18L8.82 8h2.4l-.72 1.68 2.1 2.1L14.21 8H20V5H6z"/></svg>
<div style="position:absolute;left:824px;top:246px;width:402px;height:639px;background:#fff;border-radius:6px 6px 5px 5px;box-shadow:0 3px 10px 3px rgba(60,64,67,.13),0 1px 2px rgba(60,64,67,.13)"></div>
<div style="position:absolute;left:825px;top:257px;width:400px;height:49px;background:#f1f1f1"></div>
<div class="t" style="left:883.5px;top:269.45px;font-size:23px;color:#1f1f1f;transform:scaleX(0.96);transform-origin:0 0">Single</div>
<div class="t" style="left:883.5px;top:318.75px;font-size:23px;color:#1f1f1f;transform:scaleX(0.96);transform-origin:0 0">1.15</div>
<div class="t" style="left:883.5px;top:367.85px;font-size:23px;color:#1f1f1f;transform:scaleX(0.96);transform-origin:0 0">1.5</div>
<div class="t" style="left:883.5px;top:416.95px;font-size:23px;color:#1f1f1f;transform:scaleX(0.96);transform-origin:0 0">Double</div>
<div style="position:absolute;left:825px;top:466px;width:400px;height:1px;background:#dadce0"></div>
<div class="t" style="left:883.5px;top:491.25px;font-size:23px;color:#1f1f1f;transform:scaleX(0.96);transform-origin:0 0">Add space before paragraph</div>
<div class="t" style="left:883.5px;top:540.25px;font-size:23px;color:#1f1f1f;transform:scaleX(0.96);transform-origin:0 0">Add space after paragraph</div>
<div style="position:absolute;left:825px;top:590px;width:400px;height:1px;background:#dadce0"></div>
<div class="t" style="left:883.5px;top:615.75px;font-size:23px;color:#1f1f1f;transform:scaleX(0.96);transform-origin:0 0">Custom spacing</div>
<div style="position:absolute;left:825px;top:664px;width:400px;height:1px;background:#dadce0"></div>
<div class="t" style="left:883.5px;top:690.35px;font-size:23px;color:#1f1f1f;transform:scaleX(0.96);transform-origin:0 0">Keep with next</div>
<div class="t" style="left:883.5px;top:739.65px;font-size:23px;color:#1f1f1f;transform:scaleX(0.96);transform-origin:0 0">Keep lines together</div>
<div class="t" style="left:883.5px;top:788.25px;font-size:23px;color:#1f1f1f;transform:scaleX(0.96);transform-origin:0 0">Prevent single lines</div>
<div class="t" style="left:883.5px;top:836.85px;font-size:23px;color:#1f1f1f;transform:scaleX(0.96);transform-origin:0 0">Add page break before</div>
<svg style="position:absolute;left:847px;top:324.3px" width="20.299999999999955" height="13.699999999999989" viewBox="3.41 5.59 17.59 13.41" preserveAspectRatio="none"><path fill="#444746" d="M9 16.17L4.83 12l-1.42 1.41L9 19 21 7l-1.41-1.41z"/></svg>
<svg style="position:absolute;left:847px;top:793.8px" width="20.299999999999955" height="13.700000000000045" viewBox="3.41 5.59 17.59 13.41" preserveAspectRatio="none"><path fill="#444746" d="M9 16.17L4.83 12l-1.42 1.41L9 19 21 7l-1.41-1.41z"/></svg>
<svg style="position:absolute;left:893px;top:290px;" width="20" height="26" viewBox="0 0 20 26"><path d="M6 10 V2.5 Q6 0.8 7.5 0.8 Q9 0.8 9 2.5 V9 L9.5 8.5 Q11 8 12 9 Q13.5 8.5 14.5 9.5 Q16 9 17 10.3 Q18.5 11 18.5 13 V18 Q18.5 21 16 24.5 H7.5 L1.5 16 Q0.5 14.5 1.5 13.5 Q3 12.5 4.5 14 L6 16Z" fill="#fff" stroke="#000" stroke-width="1.3" stroke-linejoin="round"/><path d="M9.5 9.5 V15 M12.3 9.5 V15 M15.1 10.2 V15" stroke="#000" stroke-width="1"/></svg>
</body></html>
